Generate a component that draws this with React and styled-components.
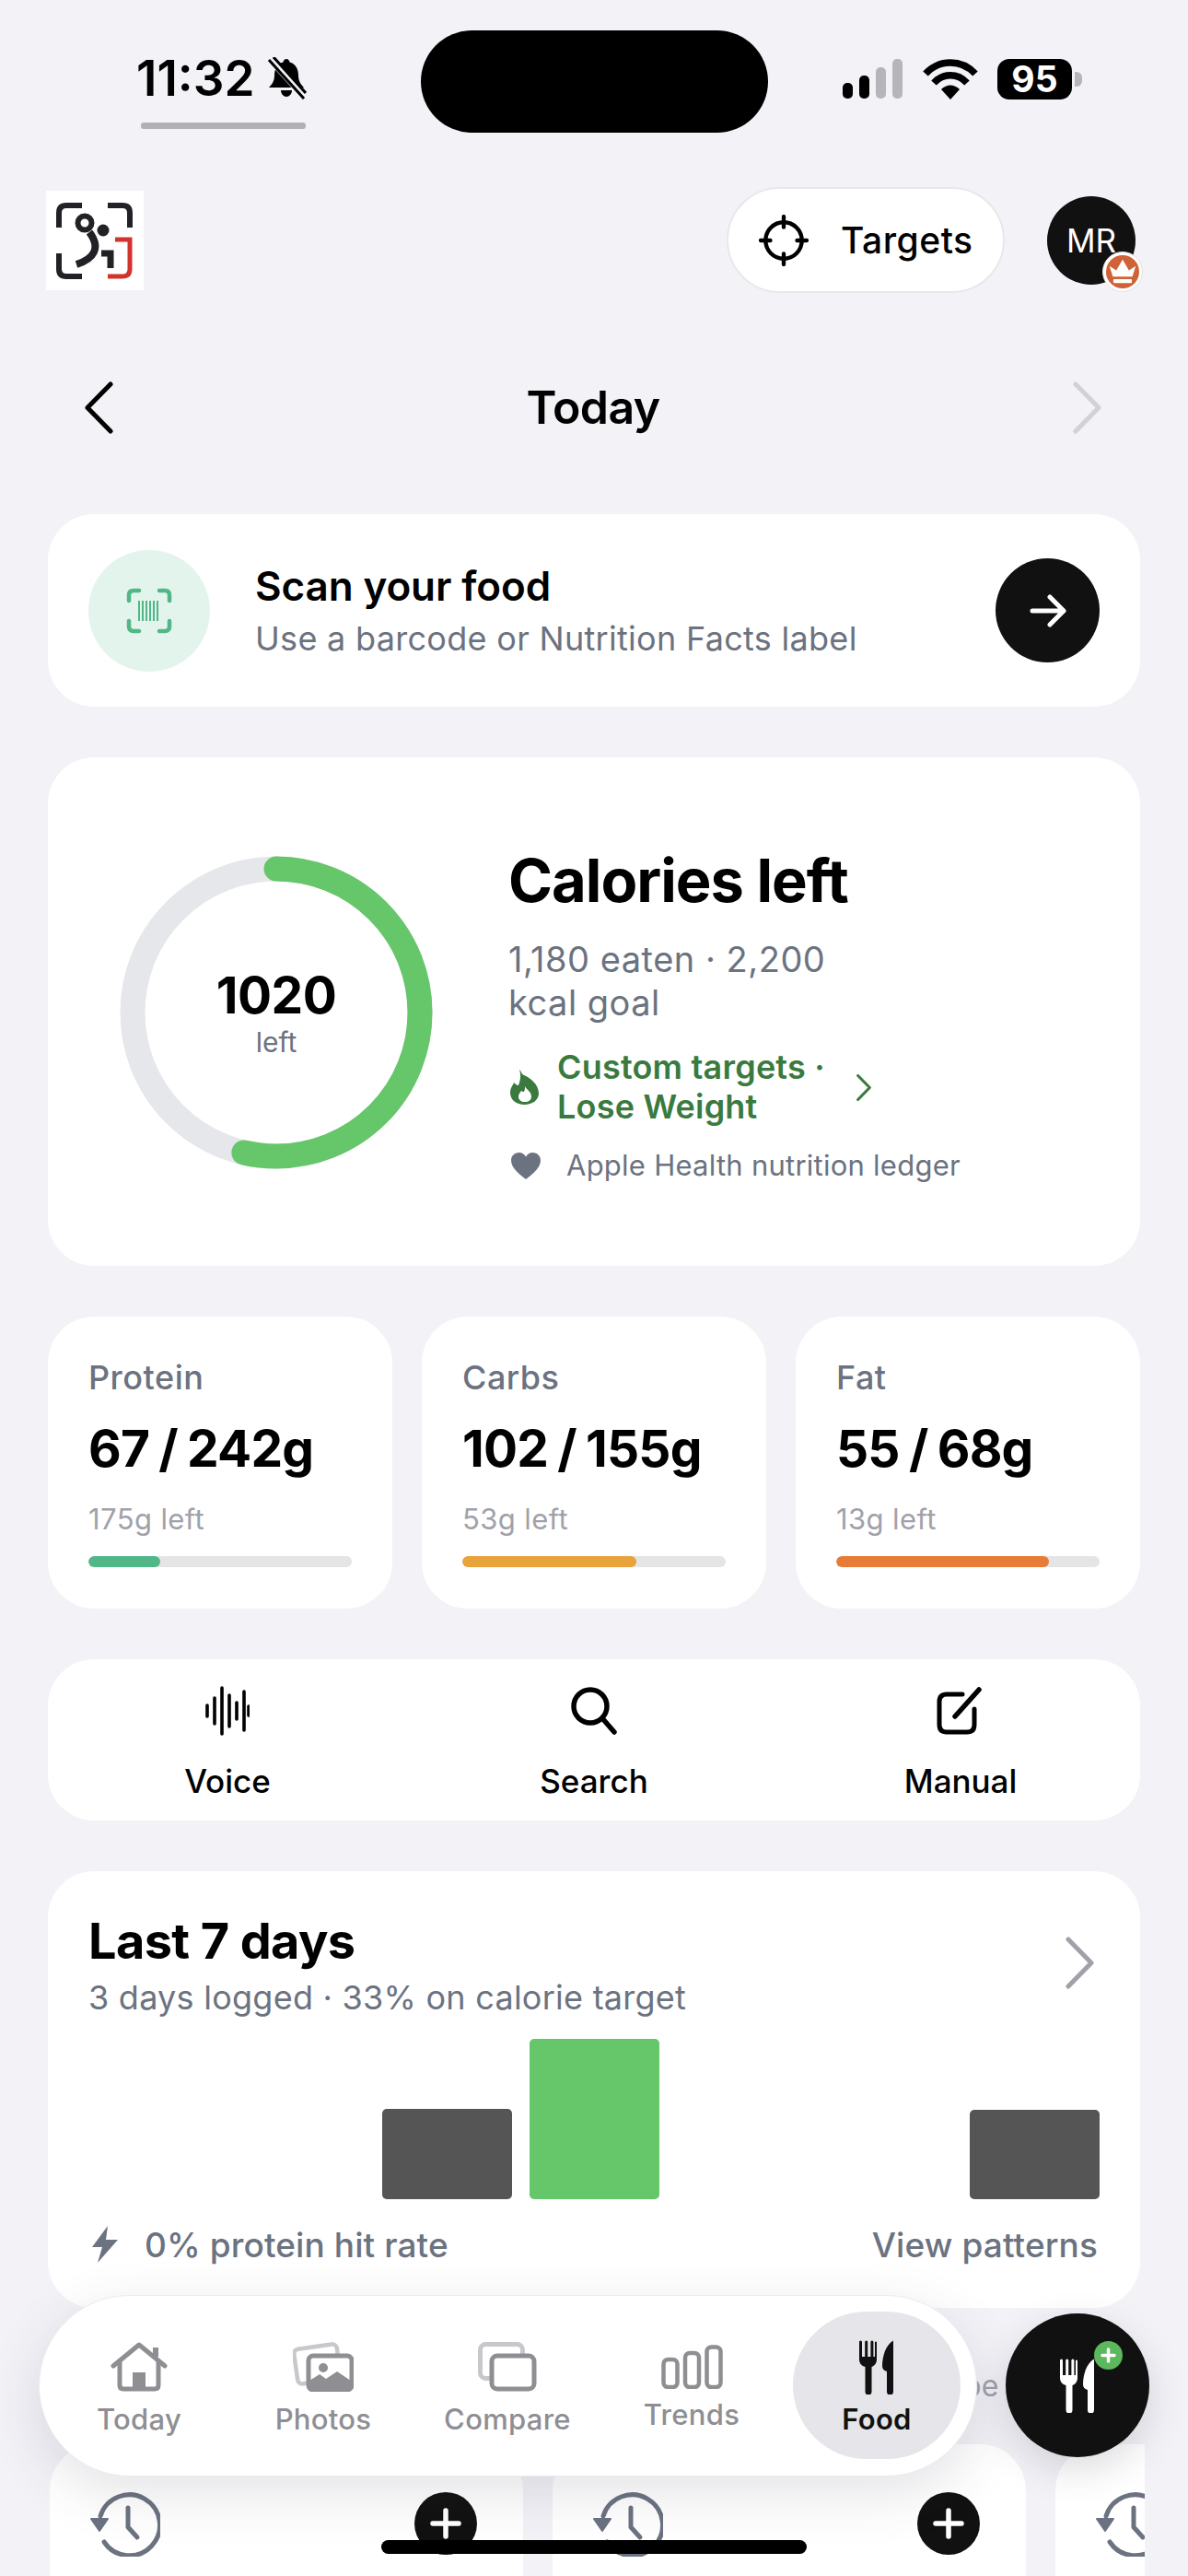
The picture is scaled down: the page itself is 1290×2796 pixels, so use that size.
import React from "react";
import styled, { createGlobalStyle } from "styled-components";

const Global = createGlobalStyle`
  html, body { margin: 0; padding: 0; background: #f2f2f7; }
  * { box-sizing: border-box; }
`;

const Page = styled.div`
  position: relative;
  width: 1290px;
  height: 2796px;
  overflow: hidden;
  background: #f2f2f7;
  font-family: Inter, "Noto Sans", sans-serif;
  color: #000;
`;

/* ---------- status bar ---------- */
const StatusBar = styled.div`
  display: grid;
  grid-template-columns: 457px 377px 1fr;
  height: 111px;
  margin-top: 33px;
`;
const StatusLeft = styled.div`
  padding: 29px 0 0 148px;
`;
const TimeRow = styled.div`
  display: flex;
  align-items: center;
  gap: 13px;
  height: 46px;
`;
const Time = styled.span`
  font-size: 53px;
  font-weight: 600;
  line-height: 46px;
  letter-spacing: 0;
`;
const TimeBar = styled.div`
  width: 179px;
  height: 7px;
  margin: 25px 0 0 5px;
  border-radius: 3px;
  background: #b0b0b6;
`;
const Island = styled.div`
  background: #000;
  border-radius: 56px;
`;
const StatusRight = styled.div`
  display: flex;
  align-items: flex-start;
  padding: 31px 0 0 81px;
`;
const Signal = styled.div`
  display: flex;
  align-items: flex-end;
  gap: 7px;
  height: 43px;
`;
const SignalBar = styled.span`
  width: 11px;
  height: ${(p) => p.$h}px;
  border-radius: 5px;
  background: ${(p) => (p.$on ? "#000" : "#b5b5ba")};
`;
const Battery = styled.div`
  display: flex;
  align-items: center;
  margin-left: 21px;
`;
const BatteryBody = styled.div`
  width: 81px;
  height: 44px;
  border-radius: 13px;
  background: #000;
  color: #fff;
  font-size: 39px;
  font-weight: 700;
  line-height: 44px;
  text-align: center;
`;
const BatteryCap = styled.span`
  width: 8px;
  height: 16px;
  margin-left: 3px;
  border-radius: 0 6px 6px 0;
  background: #b5b5ba;
`;

/* ---------- header ---------- */
const Header = styled.div`
  display: flex;
  align-items: center;
  height: 115px;
  margin-top: 59px;
  padding: 0 57px 0 50px;
`;
const Logo = styled.div`
  width: 106px;
  height: 108px;
  background: #fff;
`;
const Targets = styled.div`
  display: flex;
  align-items: center;
  gap: 35px;
  width: 302px;
  height: 115px;
  margin-left: auto;
  padding-left: 33px;
  background: #fff;
  border: 2px solid #e8e8ec;
  border-radius: 58px;
  font-size: 39px;
  font-weight: 500;
  letter-spacing: 0.5px;
`;
const Avatar = styled.div`
  position: relative;
  display: flex;
  align-items: center;
  justify-content: center;
  width: 96px;
  height: 96px;
  margin-left: 46px;
  border-radius: 50%;
  background: #111;
  color: #fff;
  font-size: 35px;
  font-weight: 400;
`;
const AvatarBadge = styled.div`
  position: absolute;
  right: -8px;
  bottom: -8px;
  width: 44px;
  height: 44px;
  border-radius: 50%;
  background: #fff;
  border: 1px solid #e6e2e0;
  display: flex;
  align-items: center;
  justify-content: center;
`;

/* ---------- date row ---------- */
const DateRow = styled.div`
  display: flex;
  align-items: center;
  justify-content: space-between;
  height: 80px;
  margin-top: 84px;
  padding: 0 94px 0 92px;
`;
const DateLabel = styled.div`
  font-size: 50px;
  font-weight: 600;
  letter-spacing: -0.6px;
`;

/* ---------- cards ---------- */
const Stack = styled.div`
  display: flex;
  flex-direction: column;
  gap: 55px;
  margin-top: 76px;
  padding: 0 52px;
`;
const Card = styled.div`
  background: #fff;
  border-radius: 50px;
`;
const ScanCard = styled(Card)`
  display: flex;
  align-items: center;
  height: 209px;
  padding: 0 44px;
`;
const ScanCircle = styled.div`
  display: flex;
  align-items: center;
  justify-content: center;
  width: 132px;
  height: 132px;
  border-radius: 50%;
  background: #e3f4ec;
`;
const ScanText = styled.div`
  margin-left: 49px;
  flex: 1;
`;
const ScanTitle = styled.div`
  font-size: 44px;
  font-weight: 600;
  line-height: 50px;
  letter-spacing: -0.1px;
`;
const ScanSub = styled.div`
  margin-top: 10px;
  font-size: 36px;
  line-height: 44px;
  letter-spacing: 0.3px;
  color: #6b7280;
`;
const ArrowButton = styled.div`
  display: flex;
  align-items: center;
  justify-content: center;
  width: 113px;
  height: 113px;
  border-radius: 50%;
  background: #111;
`;

const CaloriesCard = styled(Card)`
  display: flex;
  height: 552px;
  padding: 96px 0 0 78px;
`;
const Ring = styled.div`
  position: relative;
  width: 340px;
  height: 340px;
  margin-top: 11px;
`;
const RingCenter = styled.div`
  position: absolute;
  inset: 0;
  display: flex;
  flex-direction: column;
  align-items: center;
  justify-content: center;
`;
const RingValue = styled.div`
  font-size: 55px;
  font-weight: 700;
  line-height: 64px;
  letter-spacing: -0.5px;
`;
const RingLabel = styled.div`
  font-size: 30px;
  line-height: 38px;
  color: #6b7280;
`;
const CalText = styled.div`
  width: 500px;
  margin-left: 82px;
`;
const CalTitle = styled.div`
  font-size: 65px;
  font-weight: 700;
  line-height: 76px;
  letter-spacing: -1px;
`;
const CalSub = styled.div`
  width: 400px;
  margin-top: 24px;
  font-size: 38px;
  line-height: 47px;
  letter-spacing: 0.5px;
  color: #6b7280;
`;
const CustomRow = styled.div`
  display: flex;
  align-items: center;
  margin: 25px 0 0 1px;
  color: #3a7a3e;
`;
const CustomText = styled.div`
  width: 310px;
  margin: 0 15px 0 19px;
  font-size: 36px;
  font-weight: 600;
  line-height: 43px;
  letter-spacing: 0.2px;
`;
const HealthRow = styled.div`
  display: flex;
  align-items: center;
  gap: 28px;
  margin: 22px 0 0 1px;
  font-size: 31px;
  line-height: 40px;
  letter-spacing: 0.25px;
  color: #6b7280;
`;

const MacroGrid = styled.div`
  display: grid;
  grid-template-columns: repeat(3, 1fr);
  gap: 32px;
`;
const MacroCard = styled(Card)`
  height: 317px;
  padding: 44px 44px 0;
`;
const MacroLabel = styled.div`
  font-size: 36px;
  font-weight: 500;
  line-height: 44px;
  letter-spacing: 0.5px;
  color: #6b7280;
`;
const MacroValue = styled.div`
  margin-top: 23px;
  font-size: 55px;
  font-weight: 700;
  line-height: 64px;
  letter-spacing: -0.8px;
  word-spacing: -2px;
  white-space: nowrap;
`;
const MacroLeft = styled.div`
  margin-top: 25px;
  font-size: 31px;
  line-height: 40px;
  letter-spacing: 0.4px;
  color: #a1a1aa;
`;
const Track = styled.div`
  height: 12px;
  margin-top: 20px;
  border-radius: 6px;
  background: #e5e5e5;
  overflow: hidden;
`;
const Fill = styled.div`
  height: 100%;
  border-radius: 6px;
  background: ${(p) => p.$color};
`;

const ActionsCard = styled(Card)`
  display: grid;
  grid-template-columns: repeat(3, 398px);
  justify-content: center;
  height: 175px;
  padding: 29px 0 0;
`;
const Action = styled.div`
  display: flex;
  flex-direction: column;
  align-items: center;
`;
const ActionIcon = styled.div`
  display: flex;
  align-items: center;
  justify-content: center;
  height: 54px;
`;
const ActionLabel = styled.div`
  margin-top: 27px;
  font-size: 35px;
  font-weight: 500;
  line-height: 44px;
`;

const WeekCard = styled(Card)`
  height: 474px;
  padding: 46px 44px 0 44px;
`;
const WeekHead = styled.div`
  display: flex;
  justify-content: space-between;
  align-items: center;
`;
const WeekChevron = styled.div`
  margin-right: 6px;
`;
const WeekTitle = styled.div`
  font-size: 54px;
  font-weight: 700;
  line-height: 60px;
  letter-spacing: -0.6px;
`;
const WeekSub = styled.div`
  margin-top: 11px;
  font-size: 36px;
  line-height: 40px;
  letter-spacing: 0.25px;
  color: #6b7280;
`;
const Chart = styled.div`
  display: grid;
  grid-template-columns: repeat(7, 141px);
  justify-content: space-between;
  align-items: end;
  height: 174px;
  margin-top: 25px;
`;
const Bar = styled.div`
  height: ${(p) => p.$h}px;
  border-radius: 5px;
  background: ${(p) => p.$color};
`;
const WeekFoot = styled.div`
  display: flex;
  align-items: center;
  height: 50px;
  margin-top: 24px;
  padding-right: 2px;
  font-size: 37px;
  font-weight: 500;
  letter-spacing: 0.1px;
  color: #6b7280;
`;
const FootLeft = styled.div`
  display: flex;
  align-items: center;
  gap: 29px;
  margin-left: 4px;
  flex: 1;
`;

const SectionRow = styled.div`
  display: flex;
  justify-content: flex-end;
  height: 60px;
  padding-right: 45px;
  line-height: 60px;
  font-size: 32px;
  color: #a1a1aa;
`;
const FoodRow = styled.div`
  display: flex;
  gap: 32px;
  width: 1189px;
  margin: -22px 0 0 2px;
  overflow: hidden;
`;
const FoodCard = styled(Card)`
  display: flex;
  flex: 0 0 514px;
  align-items: flex-start;
  justify-content: space-between;
  height: 300px;
  padding: 52px 50px 0 44px;
`;
const PlusCircle = styled.div`
  display: flex;
  align-items: center;
  justify-content: center;
  width: 68px;
  height: 68px;
  border-radius: 50%;
  background: #111;
`;

/* ---------- floating bottom ---------- */
const TabBar = styled.div`
  position: absolute;
  left: 42px;
  top: 2491px;
  display: flex;
  width: 1019px;
  height: 197px;
  padding: 17px 8px 18px;
  background: #fff;
  border-radius: 99px;
  border: 1px solid #ececf0;
  box-shadow: 0 18px 60px rgba(60, 60, 80, 0.14);
`;
const Tab = styled.div`
  display: flex;
  flex-direction: column;
  align-items: center;
  width: 200px;
  padding-top: 30px;
  color: ${(p) => (p.$active ? "#111" : "#8e8e93")};
  ${(p) => p.$active && "background: #e5e5ea; border-radius: 80px; width: 182px; margin-left: 10px;"}
`;
const TabIcon = styled.div`
  display: flex;
  align-items: center;
  justify-content: center;
  height: 60px;
`;
const TabLabel = styled.div`
  margin-top: ${(p) => (p.$lift ? 2 : 7)}px;
  font-size: 31px;
  font-weight: ${(p) => (p.$active ? 600 : 500)};
  line-height: 40px;
  letter-spacing: 0.3px;
`;
const Fab = styled.div`
  position: absolute;
  left: 1092px;
  top: 2511px;
  display: flex;
  align-items: center;
  justify-content: center;
  width: 156px;
  height: 156px;
  border-radius: 50%;
  background: #111;
  color: #fff;
  box-shadow: 0 14px 40px rgba(60, 60, 80, 0.18);
`;
const FabBadge = styled.div`
  position: absolute;
  left: 96px;
  top: 30px;
  width: 31px;
  height: 31px;
  border-radius: 50%;
  background: #5cb85c;
  display: flex;
  align-items: center;
  justify-content: center;
`;
const HomeIndicator = styled.div`
  position: absolute;
  left: 414px;
  top: 2757px;
  width: 462px;
  height: 15px;
  border-radius: 8px;
  background: #000;
`;

/* ---------- drawings ---------- */
const Chevron = ({ dir = "right", color = "#000", w = 31, h = 57, sw = 5 }) => (
  <svg width={w} height={h} viewBox="0 0 31 57" fill="none" stroke={color} strokeWidth={sw} strokeLinecap="round" strokeLinejoin="round">
    <path d={dir === "right" ? "M3 3 L28 28.5 L3 54" : "M28 3 L3 28.5 L28 54"} />
  </svg>
);
const ForkKnife = () => (
  <svg width="38" height="60" viewBox="0 0 38 60" fill="currentColor" stroke="none">
    <path d="M0 3a1.5 1.5 0 0 1 3 0v16h3.2V3a1.5 1.5 0 0 1 3 0v16h3.2V3a1.5 1.5 0 0 1 3 0v16h1.6V3a1.5 1.5 0 0 1 2 0v19c0 4-2.5 7-5.5 8v27a3.5 3.5 0 0 1-7 0V30C2.5 29 0 26 0 22Z" />
    <path d="M37 1.5C29 6 25 18 25 29c0 3 1.5 5 5 6v22a3.5 3.5 0 0 0 7 0Z" />
  </svg>
);
const Clock = () => (
  <svg width="76" height="70" viewBox="0 0 76 70" fill="none" stroke="#6b7280" strokeWidth="5" strokeLinecap="round" strokeLinejoin="round">
    <path d="M11 26A33 33 0 1 1 15 54" />
    <path d="M41 17V38L51 49" />
    <path d="M1 29H19L10 42Z" fill="#6b7280" stroke="#6b7280" strokeWidth="2" />
  </svg>
);
const Plus = () => (
  <svg width="34" height="34" viewBox="0 0 34 34" stroke="#fff" strokeWidth="5.5" strokeLinecap="round">
    <path d="M17 3V31M3 17H31" />
  </svg>
);

const macros = [
  { label: "Protein", value: "67 / 242g", left: "175g left", pct: 27.2, color: "#52b788" },
  { label: "Carbs", value: "102 / 155g", left: "53g left", pct: 66, color: "#e8a33a" },
  { label: "Fat", value: "55 / 68g", left: "13g left", pct: 80.8, color: "#e67c35" },
];
const days = [0, 0, 98, 174, 0, 0, 97];

export default function App() {
  return (
    <Page>
      <Global />
      <StatusBar>
        <StatusLeft>
          <TimeRow>
            <Time>11:32</Time>
            <svg width="44" height="46" viewBox="0 0 42 46">
              <path d="M21 2c2 0 3 1.500 3.500 3.500C31 7 34 13 34 20c0 6 3 10 6 13H2c3-3 6-7 6-13 0-7 3-13 9.500-14.500C18 3.500 19 2 21 2Z" fill="#000" />
              <path d="M15 36h12c0 4-3 7-6 7s-6-3-6-7Z" fill="#000" />
              <path d="M3 1 L40 42" stroke="#f2f2f7" strokeWidth="8" />
              <path d="M2 3 L40 45 M7 0 L42 39" stroke="#000" strokeWidth="3" />
            </svg>
          </TimeRow>
          <TimeBar />
        </StatusLeft>
        <Island />
        <StatusRight>
          <Signal>
            <SignalBar $on $h={17} />
            <SignalBar $on $h={25} />
            <SignalBar $h={34} />
            <SignalBar $h={43} />
          </Signal>
          <svg style={{ marginLeft: 22 }} width="60" height="45" viewBox="0 0 60 45" fill="none" stroke="#000" strokeWidth="7.500">
            <path d="M3 16C18 0 42 0 57 16" />
            <path d="M12 26C22 15 38 15 48 26" />
            <path d="M30 44L20 33C26 27 34 27 40 33Z" fill="#000" stroke="none" />
          </svg>
          <Battery>
            <BatteryBody>95</BatteryBody>
            <BatteryCap />
          </Battery>
        </StatusRight>
      </StatusBar>

      <Header>
        <Logo>
          <svg width="106" height="108" viewBox="0 0 106 108" fill="none" strokeLinecap="butt">
            <g stroke="#222226" strokeWidth="6">
              <path d="M39 16H22q-8 0-8 8V40" />
              <path d="M67 16H83q8 0 8 8V40" />
              <path d="M14 68V85q0 8 8 8H39" />
              <circle cx="42" cy="35" r="7.500" />
              <path d="M47 45C60 62 52 74 33 80" strokeWidth="8" />
              <path d="M60 68H70V84" strokeWidth="7" />
            </g>
            <circle cx="62" cy="43" r="6.500" fill="#222226" />
            <path d="M75 53H91V85q0 8-8 8H67" stroke="#d0342c" strokeWidth="5" />
          </svg>
        </Logo>
        <Targets>
          <svg width="54" height="56" viewBox="0 0 52 54" fill="none" stroke="#000" strokeWidth="4.200" strokeLinecap="round">
            <circle cx="26" cy="27" r="19" />
            <path d="M26 2V13M26 41V52M2 27H12M40 27H50" />
          </svg>
          Targets
        </Targets>
        <Avatar>
          MR
          <AvatarBadge>
            <svg width="36" height="36" viewBox="0 0 34 34">
              <circle cx="17" cy="17" r="17" fill="#cf6236" />
              <path d="M3.500 11L10.500 15.500L17 4.500L23.500 15.500L30.500 11L27 22H7Z" fill="#fff" />
              <rect x="7.500" y="24.500" width="19" height="4" rx="1" fill="#fff" />
            </svg>
          </AvatarBadge>
        </Avatar>
      </Header>

      <DateRow>
        <Chevron dir="left" />
        <DateLabel>Today</DateLabel>
        <Chevron color="#d1d1d6" />
      </DateRow>

      <Stack>
        <ScanCard>
          <ScanCircle>
            <svg width="50" height="50" viewBox="0 0 50 50" fill="none" stroke="#52b788" strokeWidth="4.500" strokeLinecap="round">
              <path d="M3 14V8q0-5 5-5h6M36 3h6q5 0 5 5v6M47 36v6q0 5-5 5h-6M14 47H8q-5 0-5-5v-6" />
              <path d="M14 14V36M18 14V36M22 14V36M26 14V36M30 14V36M34 14V36" strokeWidth="2" strokeLinecap="butt" />
            </svg>
          </ScanCircle>
          <ScanText>
            <ScanTitle>Scan your food</ScanTitle>
            <ScanSub>Use a barcode or Nutrition Facts label</ScanSub>
          </ScanText>
          <ArrowButton>
            <svg width="40" height="36" viewBox="0 0 40 36" fill="none" stroke="#fff" strokeWidth="5" strokeLinecap="round" strokeLinejoin="round">
              <path d="M3 18H37M22 3L37 18L22 33" />
            </svg>
          </ArrowButton>
        </ScanCard>

        <CaloriesCard>
          <Ring>
            <svg width="340" height="340" viewBox="0 0 340 340" fill="none" strokeWidth="27">
              <circle cx="170" cy="170" r="156" stroke="#e5e7eb" />
              <circle
                cx="170"
                cy="170"
                r="156"
                stroke="#66c66a"
                strokeLinecap="round"
                strokeDasharray={`${2 * Math.PI * 156 * 0.536} ${2 * Math.PI * 156}`}
                transform="rotate(-90 170 170)"
              />
            </svg>
            <RingCenter>
              <RingValue>1020</RingValue>
              <RingLabel>left</RingLabel>
            </RingCenter>
          </Ring>
          <CalText>
            <CalTitle>Calories left</CalTitle>
            <CalSub>1,180 eaten · 2,200 kcal goal</CalSub>
            <CustomRow>
              <svg width="33" height="40" viewBox="0 0 33 40">
                <path d="M11 1c3 3 2 5 5 6 7 3 16 10 16 20 0 7-7 12-15.500 12S1 34 1 26c0-5 3-8 4-11 2 2 3 3 5 3 2-5 3-11 1-17Z" fill="#3a7a3e" />
                <path d="M17 19c1 3 7 6 7 11 0 4-3 6-7 6s-7-2-7-6c0-3 2-4 3-6 1 1 2 1 3 1 1-2 1-4 1-6Z" fill="#fff" />
              </svg>
              <CustomText>Custom targets · Lose Weight</CustomText>
              <Chevron w={16} h={29} sw={6} color="#3a7a3e" />
            </CustomRow>
            <HealthRow>
              <svg width="32" height="29" viewBox="0 0 32 29" style={{ marginLeft: 2 }}>
                <path d="M16 29C7 22 0 16 0 8.500 0 3.500 4 0 8.500 0 12 0 14.500 2 16 4.500 17.500 2 20 0 23.500 0 28 0 32 3.500 32 8.500 32 16 25 22 16 29Z" fill="#6b7280" />
              </svg>
              Apple Health nutrition ledger
            </HealthRow>
          </CalText>
        </CaloriesCard>

        <MacroGrid>
          {macros.map((m) => (
            <MacroCard key={m.label}>
              <MacroLabel>{m.label}</MacroLabel>
              <MacroValue>{m.value}</MacroValue>
              <MacroLeft>{m.left}</MacroLeft>
              <Track>
                <Fill $color={m.color} style={{ width: `${m.pct}%` }} />
              </Track>
            </MacroCard>
          ))}
        </MacroGrid>

        <ActionsCard>
          <Action>
            <ActionIcon>
              <svg width="48" height="54" viewBox="0 0 48 54" stroke="#000" strokeWidth="3.600" strokeLinecap="round">
                <path d="M2 21V33M10 13V41M18 2V52M26 10V44M34 18V36M42 6V48M47 22V32" />
              </svg>
            </ActionIcon>
            <ActionLabel>Voice</ActionLabel>
          </Action>
          <Action>
            <ActionIcon>
              <svg width="50" height="52" viewBox="0 0 50 52" fill="none" stroke="#000" strokeWidth="5.500" strokeLinecap="round">
                <circle cx="21" cy="21" r="18" />
                <path d="M34 34L47 49" />
              </svg>
            </ActionIcon>
            <ActionLabel>Search</ActionLabel>
          </Action>
          <Action>
            <ActionIcon>
              <svg width="52" height="52" viewBox="0 0 52 52" fill="none" stroke="#000" strokeWidth="5" strokeLinecap="round" strokeLinejoin="round">
                <path d="M28 8H11q-8 0-8 8V41q0 8 8 8H33q8 0 8-8V24" />
                <path d="M20 32L46 3" strokeWidth="5.500" />
              </svg>
            </ActionIcon>
            <ActionLabel>Manual</ActionLabel>
          </Action>
        </ActionsCard>

        <WeekCard>
          <WeekHead>
            <div>
              <WeekTitle>Last 7 days</WeekTitle>
              <WeekSub>3 days logged · 33% on calorie target</WeekSub>
            </div>
            <WeekChevron>
              <Chevron color="#a1a1aa" />
            </WeekChevron>
          </WeekHead>
          <Chart>
            {days.map((h, i) => (
              <Bar key={i} $h={h} $color={h > 150 ? "#66c66a" : "#555"} />
            ))}
          </Chart>
          <WeekFoot>
            <FootLeft>
              <svg width="28" height="40" viewBox="0 0 28 40">
                <path d="M17 0L0 23H11L6 40L28 15H15Z" fill="#6b7280" />
              </svg>
              0% protein hit rate
            </FootLeft>
            View patterns
          </WeekFoot>
        </WeekCard>

        <SectionRow>Describe a meal</SectionRow>
        <FoodRow>
          {[0, 1, 2].map((i) => (
            <FoodCard key={i}>
              <Clock />
              <PlusCircle>
                <Plus />
              </PlusCircle>
            </FoodCard>
          ))}
        </FoodRow>
      </Stack>

      <TabBar>
        <Tab>
          <TabIcon>
            <svg width="62" height="54" viewBox="0 0 62 54" fill="none" stroke="currentColor" strokeWidth="5" strokeLinecap="round" strokeLinejoin="round">
              <path d="M3 26L31 3L59 26" />
              <path d="M49 16V6" strokeWidth="6" strokeLinecap="butt" />
              <path d="M10 22V47q0 4 4 4H48q4 0 4-4V22" />
              <rect x="24" y="33" width="14" height="18" fill="currentColor" stroke="none" />
            </svg>
          </TabIcon>
          <TabLabel>Today</TabLabel>
        </Tab>
        <Tab>
          <TabIcon>
            <svg width="66" height="54" viewBox="0 0 66 54" fill="none">
              <rect x="3" y="5" width="47" height="38" rx="5" stroke="#c7c7cc" strokeWidth="4.500" transform="rotate(-8 26 24)" />
              <rect x="17" y="15" width="47" height="37" rx="5" fill="#fff" stroke="#8e8e93" strokeWidth="5" />
              <circle cx="33" cy="28" r="5" fill="#8e8e93" />
              <path d="M18 42L29 35L36 40L48 32L63 42V48q0 5-5 5H20q-3 0-3-5Z" fill="#8e8e93" />
            </svg>
          </TabIcon>
          <TabLabel>Photos</TabLabel>
        </Tab>
        <Tab>
          <TabIcon>
            <svg width="64" height="54" viewBox="0 0 64 54" fill="none" strokeWidth="5">
              <rect x="2.500" y="2.500" width="46" height="37" rx="6" stroke="#c7c7cc" />
              <rect x="15" y="15" width="46" height="36" rx="6" fill="#fff" stroke="#8e8e93" />
            </svg>
          </TabIcon>
          <TabLabel>Compare</TabLabel>
        </Tab>
        <Tab>
          <TabIcon>
            <svg width="67" height="48" viewBox="0 0 67 48" fill="none" stroke="currentColor" strokeWidth="4.500">
              <rect x="2.500" y="16" width="15" height="30" rx="5" />
              <rect x="26" y="9" width="15" height="37" rx="5" />
              <rect x="49.500" y="2.500" width="15" height="43.500" rx="5" />
            </svg>
          </TabIcon>
          <TabLabel $lift>Trends</TabLabel>
        </Tab>
        <Tab $active>
          <TabIcon>
            <ForkKnife />
          </TabIcon>
          <TabLabel $active>Food</TabLabel>
        </Tab>
      </TabBar>

      <Fab>
        <ForkKnife />
        <FabBadge>
          <svg width="17" height="17" viewBox="0 0 17 17" stroke="#fff" strokeWidth="3.500" strokeLinecap="round">
            <path d="M8.500 2V15M2 8.500H15" />
          </svg>
        </FabBadge>
      </Fab>
      <HomeIndicator />
    </Page>
  );
}
